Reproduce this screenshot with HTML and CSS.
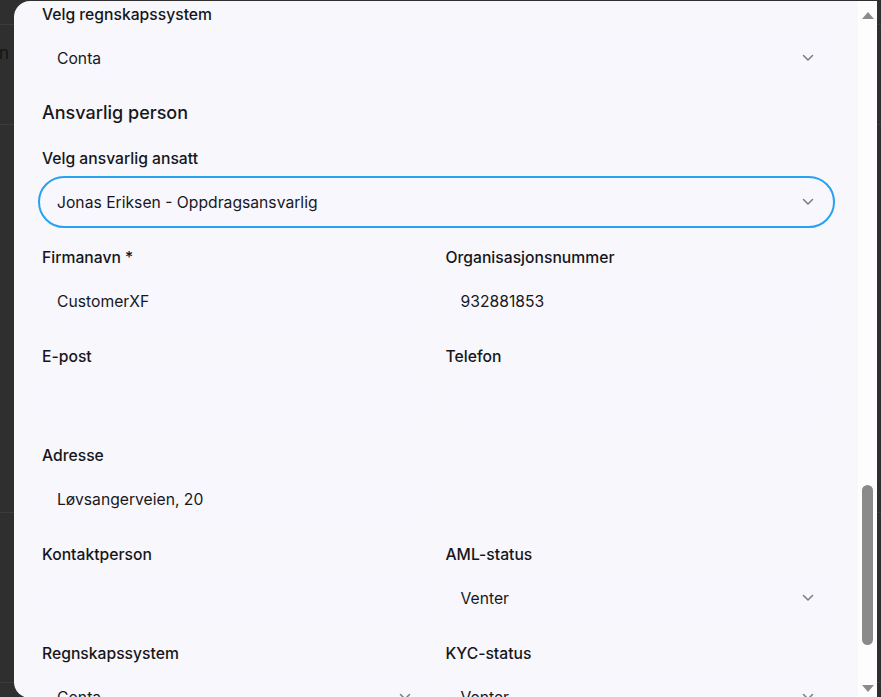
FILE: index.html
```html
<!DOCTYPE html>
<html lang="no">
<head>
<meta charset="utf-8">
<title>Kunde</title>
<link rel="stylesheet" href="styles.css">
</head>
<body>
<div class="backdrop">
  <div class="bg-row bg-row-1"></div>
  <div class="bg-row bg-row-2"><span class="bg-text">n</span></div>
  <div class="bg-row bg-row-3"></div>
  <div class="bg-row bg-row-4"></div>
</div>

<div class="modal">
  <div class="modal-body">
    <div class="field">
      <label class="label">Velg regnskapssystem</label>
      <div class="input select"><span class="value">Conta</span><svg class="chev" width="12" height="8" viewBox="0 0 12 8"><path d="M1.5 1.5 L6 6 L10.5 1.5" fill="none" stroke="#7b7b80" stroke-width="1.5" stroke-linecap="round" stroke-linejoin="round"/></svg></div>
    </div>

    <h2 class="section-title">Ansvarlig person</h2>

    <div class="field">
      <label class="label">Velg ansvarlig ansatt</label>
      <div class="input select focused"><span class="value">Jonas Eriksen - Oppdragsansvarlig</span><svg class="chev" width="12" height="8" viewBox="0 0 12 8"><path d="M1.5 1.5 L6 6 L10.5 1.5" fill="none" stroke="#7b7b80" stroke-width="1.5" stroke-linecap="round" stroke-linejoin="round"/></svg></div>
    </div>

    <div class="grid">
      <div class="field">
        <label class="label">Firmanavn *</label>
        <div class="input"><span class="value">CustomerXF</span></div>
      </div>
      <div class="field">
        <label class="label">Organisasjonsnummer</label>
        <div class="input"><span class="value">932881853</span></div>
      </div>
      <div class="field">
        <label class="label">E-post</label>
        <div class="input"></div>
      </div>
      <div class="field">
        <label class="label">Telefon</label>
        <div class="input"></div>
      </div>
      <div class="field">
        <label class="label">Adresse</label>
        <div class="input"><span class="value">Løvsangerveien, 20</span></div>
      </div>
      <div class="field"></div>
      <div class="field">
        <label class="label">Kontaktperson</label>
        <div class="input"></div>
      </div>
      <div class="field">
        <label class="label">AML-status</label>
        <div class="input select"><span class="value">Venter</span><svg class="chev" width="12" height="8" viewBox="0 0 12 8"><path d="M1.5 1.5 L6 6 L10.5 1.5" fill="none" stroke="#7b7b80" stroke-width="1.5" stroke-linecap="round" stroke-linejoin="round"/></svg></div>
      </div>
      <div class="field">
        <label class="label">Regnskapssystem</label>
        <div class="input select"><span class="value">Conta</span><svg class="chev" width="12" height="8" viewBox="0 0 12 8"><path d="M1.5 1.5 L6 6 L10.5 1.5" fill="none" stroke="#7b7b80" stroke-width="1.5" stroke-linecap="round" stroke-linejoin="round"/></svg></div>
      </div>
      <div class="field">
        <label class="label">KYC-status</label>
        <div class="input select"><span class="value">Venter</span><svg class="chev" width="12" height="8" viewBox="0 0 12 8"><path d="M1.5 1.5 L6 6 L10.5 1.5" fill="none" stroke="#7b7b80" stroke-width="1.5" stroke-linecap="round" stroke-linejoin="round"/></svg></div>
      </div>
    </div>
  </div>

  <div class="scrollbar">
    <div class="arrow arrow-up"></div>
    <div class="thumb"></div>
    <div class="arrow arrow-down"></div>
  </div>
</div>
</body>
</html>
```

FILE: styles.css
```css
html, body {
  margin: 0;
  padding: 0;
}

body {
  width: 881px;
  height: 697px;
  overflow: hidden;
  background: #2f2f2f;
  font-family: Inter, "Noto Sans", "Liberation Sans", sans-serif;
  position: relative;
}

.backdrop {
  display: flex;
  flex-direction: column;
}

.bg-row {
  border-bottom: 1px solid #3b3b3b;
  box-sizing: border-box;
}

.bg-row-1 { height: 25px; }
.bg-row-2 {
  height: 100px;
  display: flex;
  align-items: flex-start;
  padding-top: 17px;
}
.bg-row-3 { height: 388px; }
.bg-row-4 { height: 170px; }

.bg-text {
  font-size: 17px;
  line-height: 22px;
  color: #141414;
  margin-left: -1px;
}

.modal {
  position: absolute;
  left: 14px;
  top: 1px;
  width: 863px;
  height: 697px;
  display: flex;
  background: #f7f7fc;
  border-radius: 16px 0 0 16px;
  overflow: hidden;
}

.modal-body {
  flex: 1;
  padding: 3px 27px 0 28px;
  overflow: hidden;
  display: flex;
  flex-direction: column;
}

.field {
  display: flex;
  flex-direction: column;
  gap: 10px;
}

.label {
  font-size: 15.7px;
  line-height: 22px;
  font-weight: 500;
  color: #16161a;
}

.input {
  height: 44px;
  border-radius: 22px;
  background: #f7f7fd;
  display: flex;
  align-items: center;
  padding: 0 17px 0 15px;
  box-sizing: border-box;
}

.value {
  flex: 1;
  font-size: 15.7px;
  color: #17171c;
  white-space: nowrap;
}

.chev {
  flex: none;
}

.focused {
  outline: 2px solid #28a1f0;
  outline-offset: 2px;
}

.section-title {
  margin: 20px 0 22px;
  font-size: 18px;
  line-height: 26px;
  font-weight: 500;
  color: #17171c;
}

.grid {
  margin-top: 23px;
  display: grid;
  grid-template-columns: 1fr 1fr;
  column-gap: 18px;
  row-gap: 23px;
}

.scrollbar {
  width: 19px;
  flex: none;
  background: #fdfdfd;
  display: flex;
  flex-direction: column;
  align-items: center;
  padding-top: 11px;
  box-sizing: border-box;
}

.arrow {
  width: 0;
  height: 0;
  border-left: 6px solid transparent;
  border-right: 6px solid transparent;
}

.arrow-up {
  border-bottom: 7px solid #8c8c8c;
}

.arrow-down {
  margin-top: 40px;
  border-top: 7px solid #8c8c8c;
}

.thumb {
  margin-top: 466px;
  width: 11px;
  height: 160px;
  border-radius: 6px;
  background: #8a8a8a;
}
```
